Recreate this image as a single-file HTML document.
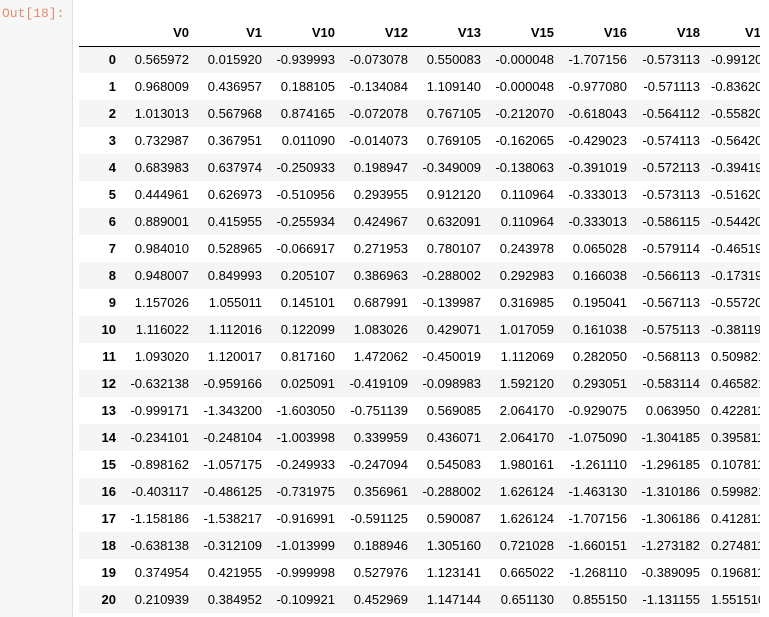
<!DOCTYPE html>
<html><head><meta charset="utf-8"><style>
html,body{margin:0;padding:0;width:769px;height:617px;overflow:hidden;background:#fff;}
.gut{position:absolute;left:0;top:0;width:72px;height:617px;background:#f7f7f7;border-right:1px solid #e0e0e0;}
.out{position:absolute;left:2px;top:6px;font:13px "Liberation Mono",monospace;color:#d84315;opacity:.6}
.wrap{position:absolute;left:79px;top:19px;width:681px;height:598px;overflow:hidden}
table{border-collapse:collapse;font:13px "Liberation Sans",Arial,sans-serif;color:#000;table-layout:fixed;white-space:nowrap;width:730px}
td,th{height:27px;padding:0 8px 0 0;text-align:right;box-sizing:border-box;overflow:hidden}
th{font-weight:bold}
thead th{border-bottom:1px solid #000;height:27px}
tbody tr:nth-child(odd){background:#f5f5f5}
col.i{width:45px}col.c{width:73px}col.l{width:101px}
td.l{text-align:left;padding-left:3px}
</style></head><body>
<div class="gut"></div><div class="out">Out[18]:</div>
<div class="wrap">
<table>
<colgroup><col class="i"><col class="c"><col class="c"><col class="c"><col class="c"><col class="c"><col class="c"><col class="c"><col class="c"><col class="l"></colgroup>
<thead><tr><th></th><th>V0</th><th>V1</th><th>V10</th><th>V12</th><th>V13</th><th>V15</th><th>V16</th><th>V18</th><th style="text-align:left;padding-left:37px">V19</th></tr></thead>
<tbody>
<tr><th>0</th><td>0.565972</td><td>0.015920</td><td>-0.939993</td><td>-0.073078</td><td>0.550083</td><td>-0.000048</td><td>-1.707156</td><td>-0.573113</td><td class="l">-0.991201</td></tr>
<tr><th>1</th><td>0.968009</td><td>0.436957</td><td>0.188105</td><td>-0.134084</td><td>1.109140</td><td>-0.000048</td><td>-0.977080</td><td>-0.571113</td><td class="l">-0.836201</td></tr>
<tr><th>2</th><td>1.013013</td><td>0.567968</td><td>0.874165</td><td>-0.072078</td><td>0.767105</td><td>-0.212070</td><td>-0.618043</td><td>-0.564112</td><td class="l">-0.558201</td></tr>
<tr><th>3</th><td>0.732987</td><td>0.367951</td><td>0.011090</td><td>-0.014073</td><td>0.769105</td><td>-0.162065</td><td>-0.429023</td><td>-0.574113</td><td class="l">-0.564201</td></tr>
<tr><th>4</th><td>0.683983</td><td>0.637974</td><td>-0.250933</td><td>0.198947</td><td>-0.349009</td><td>-0.138063</td><td>-0.391019</td><td>-0.572113</td><td class="l">-0.394191</td></tr>
<tr><th>5</th><td>0.444961</td><td>0.626973</td><td>-0.510956</td><td>0.293955</td><td>0.912120</td><td>0.110964</td><td>-0.333013</td><td>-0.573113</td><td class="l">-0.516201</td></tr>
<tr><th>6</th><td>0.889001</td><td>0.415955</td><td>-0.255934</td><td>0.424967</td><td>0.632091</td><td>0.110964</td><td>-0.333013</td><td>-0.586115</td><td class="l">-0.544201</td></tr>
<tr><th>7</th><td>0.984010</td><td>0.528965</td><td>-0.066917</td><td>0.271953</td><td>0.780107</td><td>0.243978</td><td>0.065028</td><td>-0.579114</td><td class="l">-0.465191</td></tr>
<tr><th>8</th><td>0.948007</td><td>0.849993</td><td>0.205107</td><td>0.386963</td><td>-0.288002</td><td>0.292983</td><td>0.166038</td><td>-0.566113</td><td class="l">-0.173191</td></tr>
<tr><th>9</th><td>1.157026</td><td>1.055011</td><td>0.145101</td><td>0.687991</td><td>-0.139987</td><td>0.316985</td><td>0.195041</td><td>-0.567113</td><td class="l">-0.557201</td></tr>
<tr><th>10</th><td>1.116022</td><td>1.112016</td><td>0.122099</td><td>1.083026</td><td>0.429071</td><td>1.017059</td><td>0.161038</td><td>-0.575113</td><td class="l">-0.381191</td></tr>
<tr><th>11</th><td>1.093020</td><td>1.120017</td><td>0.817160</td><td>1.472062</td><td>-0.450019</td><td>1.112069</td><td>0.282050</td><td>-0.568113</td><td class="l">0.509821</td></tr>
<tr><th>12</th><td>-0.632138</td><td>-0.959166</td><td>0.025091</td><td>-0.419109</td><td>-0.098983</td><td>1.592120</td><td>0.293051</td><td>-0.583114</td><td class="l">0.465821</td></tr>
<tr><th>13</th><td>-0.999171</td><td>-1.343200</td><td>-1.603050</td><td>-0.751139</td><td>0.569085</td><td>2.064170</td><td>-0.929075</td><td>0.063950</td><td class="l">0.422811</td></tr>
<tr><th>14</th><td>-0.234101</td><td>-0.248104</td><td>-1.003998</td><td>0.339959</td><td>0.436071</td><td>2.064170</td><td>-1.075090</td><td>-1.304185</td><td class="l">0.395811</td></tr>
<tr><th>15</th><td>-0.898162</td><td>-1.057175</td><td>-0.249933</td><td>-0.247094</td><td>0.545083</td><td>1.980161</td><td>-1.261110</td><td>-1.296185</td><td class="l">0.107811</td></tr>
<tr><th>16</th><td>-0.403117</td><td>-0.486125</td><td>-0.731975</td><td>0.356961</td><td>-0.288002</td><td>1.626124</td><td>-1.463130</td><td>-1.310186</td><td class="l">0.599821</td></tr>
<tr><th>17</th><td>-1.158186</td><td>-1.538217</td><td>-0.916991</td><td>-0.591125</td><td>0.590087</td><td>1.626124</td><td>-1.707156</td><td>-1.306186</td><td class="l">0.412811</td></tr>
<tr><th>18</th><td>-0.638138</td><td>-0.312109</td><td>-1.013999</td><td>0.188946</td><td>1.305160</td><td>0.721028</td><td>-1.660151</td><td>-1.273182</td><td class="l">0.274811</td></tr>
<tr><th>19</th><td>0.374954</td><td>0.421955</td><td>-0.999998</td><td>0.527976</td><td>1.123141</td><td>0.665022</td><td>-1.268110</td><td>-0.389095</td><td class="l">0.196811</td></tr>
<tr><th>20</th><td>0.210939</td><td>0.384952</td><td>-0.109921</td><td>0.452969</td><td>1.147144</td><td>0.651130</td><td>0.855150</td><td>-1.131155</td><td class="l">1.551510</td></tr>
</tbody></table>
</div>
</body></html>
